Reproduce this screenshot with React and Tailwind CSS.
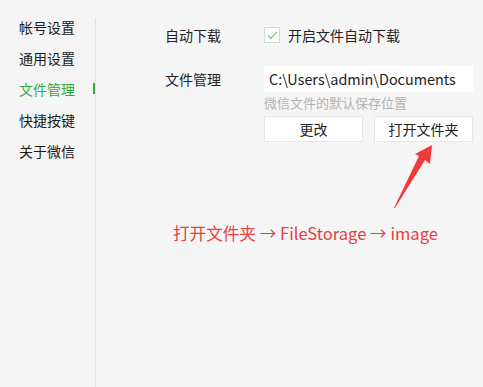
const navItems = ['帐号设置', '通用设置', '文件管理', '快捷按键', '关于微信'];

const font = { fontFamily: '"Noto Sans CJK SC", "Noto Sans", sans-serif' };

export default function App() {
  return (
    <div
      className="relative flex h-[387px] w-[483px] overflow-hidden bg-[#f5f5f5] text-[14px] text-[#1a1a1a]"
      style={font}
    >
      <nav className="flex w-[95px] shrink-0 flex-col pt-[11px]">
        {navItems.map((item) => {
          const active = item === '文件管理';
          return (
            <div key={item} className="flex h-[31px] items-center">
              <span className={`pl-[19px] leading-none ${active ? 'text-[#2fae3a]' : ''}`}>{item}</span>
              {active && <span className="ml-auto h-[11px] w-[2px] bg-[#2fae3a]" />}
            </div>
          );
        })}
      </nav>

      <main className="mt-[18px] flex-1 border-l border-[#e2e2e2] pl-[69px] pt-[9px]">
        <div className="flex h-[16px] items-center">
          <span className="w-[99px] leading-none text-[#222]">自动下载</span>
          <span className="flex h-[16px] w-[16px] items-center justify-center border border-[#d6d6d6] bg-white">
            <svg width="11" height="9" viewBox="0 0 11 9" fill="none">
              <path d="M1 4.5 L4 7.5 L10 1" stroke="#5bbf6a" strokeWidth="1.1" />
            </svg>
          </span>
          <span className="ml-[8px] leading-none text-[#222]">开启文件自动下载</span>
        </div>

        <div className="mt-[23px] flex">
          <span className="flex h-[26px] w-[99px] items-center leading-none text-[#222]">文件管理</span>
          <div className="flex flex-col">
            <div className="flex h-[26px] w-[209px] items-center bg-white pl-[5px] text-[14.4px] leading-none text-[#222]">
              C:\Users\admin\Documents
            </div>
            <div className="mt-[3px] text-[13px] leading-[16px] text-[#b3b3b3]">微信文件的默认保存位置</div>
            <div className="mt-[5px] flex gap-[11px]">
              <button className="h-[26px] w-[99px] border border-[#e6e6e6] bg-white text-[14px] leading-none text-[#222]">
                更改
              </button>
              <button className="h-[26px] w-[99px] border border-[#e6e6e6] bg-white text-[14px] leading-none text-[#222]">
                打开文件夹
              </button>
            </div>
          </div>
        </div>

        <p className="mt-[83px] pl-[8px] text-[16.6px] leading-none text-[#e8403f]">
          打开文件夹 → FileStorage → image
        </p>
      </main>

      <svg className="absolute left-[390px] top-[140px]" width="50" height="75" viewBox="0 0 50 75">
        <path d="M4 68 L29 16 L25 14 L42 5 L40 24 L35 20 L5 68 Z" fill="#f03a3a" />
      </svg>
    </div>
  );
}
